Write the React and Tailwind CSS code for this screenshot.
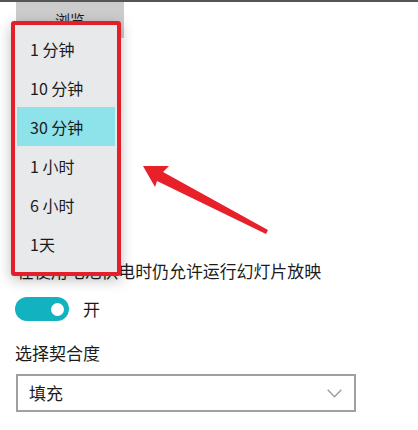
import React from "react";

const items = ["1 分钟", "10 分钟", "30 分钟", "1 小时", "6 小时", "1天"];

export default function App() {
  return (
    <div
      className="relative w-[418px] h-[430px] overflow-hidden bg-white text-[#1b1b1b]"
      style={{ fontFamily: '"Noto Sans CJK SC", "Noto Sans", sans-serif' }}
    >
      <div className="h-[2px] bg-[#555555]" />
      <div className="ml-[16px] w-[108px] h-[36px] bg-[#cccccc] flex items-center justify-center text-[15px]">
        浏览
      </div>

      <div className="mt-[222px] ml-[17px] text-[16.9px] leading-[22px] whitespace-nowrap">
        在使用电池供电时仍允许运行幻灯片放映
      </div>

      <div className="mt-[15px] ml-[15px] flex items-center">
        <div className="w-[54px] h-[24px] rounded-full bg-[#13b2c0] flex items-center justify-end pr-[5px]">
          <div className="w-[13px] h-[13px] rounded-full bg-white" />
        </div>
        <span className="ml-[14px] text-[17px] leading-[22px]">开</span>
      </div>

      <div className="mt-[21px] ml-[15px] text-[17px] leading-[22px]">选择契合度</div>

      <div className="mt-[10px] ml-[16px] w-[340px] h-[38px] border-2 border-[#a0a0a0] flex items-center justify-between pl-[11px] pr-[12px]">
        <span className="text-[17px] leading-[22px]">填充</span>
        <svg width="15" height="9" viewBox="0 0 15 9" fill="none">
          <path d="M0.7 0.7 L7.5 7.7 L14.3 0.7" stroke="#9a9a9a" strokeWidth="1.3" />
        </svg>
      </div>

      {/* dropdown menu with red annotation */}
      <div className="absolute left-[11px] top-[21px] w-[110px] h-[255px] border-[4px] border-[#e3202a] rounded-[3px] bg-[#e7e9eb] shadow-[0_4px_14px_rgba(0,0,0,0.25)] pt-[4px]">
        {items.map((t, i) => (
          <div
            key={t}
            className={
              i === 2
                ? "mx-[2px] h-[39px] flex items-center pl-[13px] bg-[#8ee2ea] text-[16px]"
                : "mx-[2px] h-[39px] flex items-center pl-[13px] text-[16px]"
            }
          >
            {t}
          </div>
        ))}
      </div>

      {/* red arrow */}
      <svg className="absolute left-0 top-0" width="418" height="430" viewBox="0 0 418 430">
        <polygon
          points="143,166 169,166 163,172 268,230 266,234 157,181 155,187"
          fill="#e8202a"
        />
      </svg>
    </div>
  );
}
